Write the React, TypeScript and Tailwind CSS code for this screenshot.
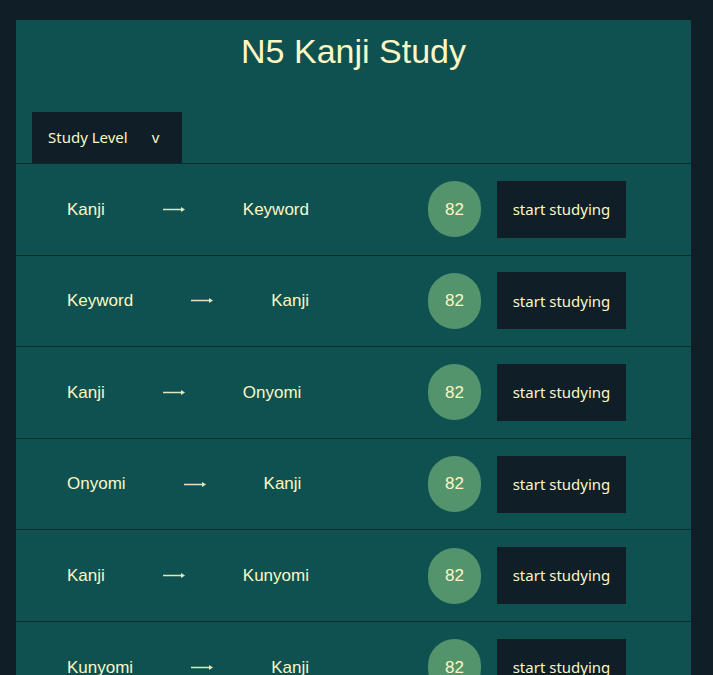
const rows: [string, string][] = [
  ["Kanji", "Keyword"],
  ["Keyword", "Kanji"],
  ["Kanji", "Onyomi"],
  ["Onyomi", "Kanji"],
  ["Kanji", "Kunyomi"],
  ["Kunyomi", "Kanji"],
]

function Arrow() {
  return (
    <svg width="22" height="7" viewBox="0 0 22 7" className="shrink-0">
      <line x1="0" y1="3.5" x2="20" y2="3.5" stroke="#dfe8bd" strokeWidth="1.5" />
      <path d="M18 1 L22 3.5 L18 6 Z" fill="#dfe8bd" />
    </svg>
  )
}

function StudyRow({ from, to }: { from: string; to: string }) {
  return (
    <div className="flex h-[91.6px] items-center border-t border-[#0b2b2e] pl-[51px]">
      <div className="flex w-[361px] items-center gap-[58px] text-[17px] text-[#fcf7c5]">
        <span>{from}</span>
        <Arrow />
        <span>{to}</span>
      </div>
      <div className="flex h-[56px] w-[53px] items-center justify-center rounded-full bg-[#53946c] text-[17px] text-[#fcf7c5]">
        82
      </div>
      <button className="ml-4 h-[57px] w-[129px] bg-[#0f1e27] text-[15px] text-[#fcf7c5] [font-family:'Noto_Sans',sans-serif]">
        start studying
      </button>
    </div>
  )
}

export default function App() {
  return (
    <div className="min-h-screen overflow-hidden bg-[#0f1e27] pt-5 [font-family:'Liberation_Sans',Arial,sans-serif]">
      <div className="ml-4 w-[675px] bg-[#0e5150] pb-10">
        <h1 className="pt-[11px] text-center text-[34px] leading-[40px] text-[#fcf7c5]">N5 Kanji Study</h1>

        {/* level picker */}
        <div className="mt-[41px] px-4">
          <button className="flex h-[51px] w-[150px] items-center gap-6 bg-[#0f1e27] pl-4 text-[15px] text-[#fcf7c5] [font-family:'Noto_Sans',sans-serif]">
            <span>Study Level</span>
            <span>v</span>
          </button>
        </div>

        {rows.map(([a, b], i) => (
          <StudyRow key={i} from={a} to={b} />
        ))}
      </div>
    </div>
  )
}
